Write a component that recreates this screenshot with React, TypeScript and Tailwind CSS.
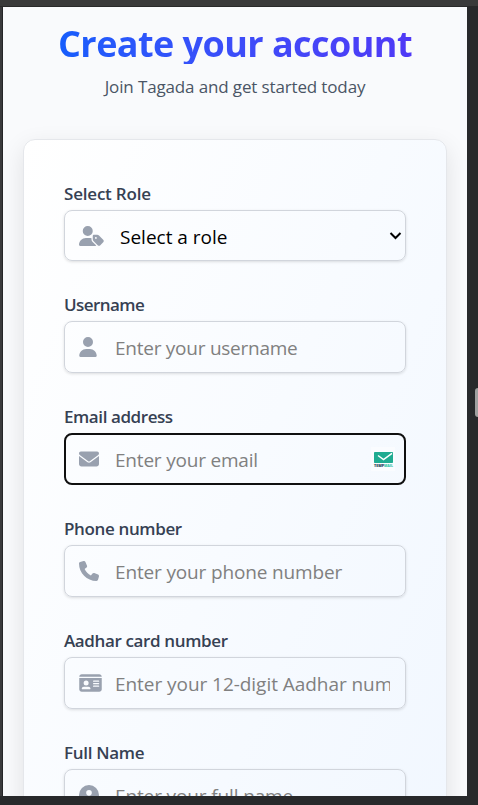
import type { ReactNode } from "react";
import { FaUser, FaEnvelope, FaPhone, FaIdCard, FaUserTag, FaCircleUser } from "react-icons/fa6";

function TempMailBadge() {
  return (
    <svg width="24" height="24" viewBox="0 0 24 24" className="shrink-0">
      <rect width="24" height="24" fill="#fafcff" />
      <rect x="3" y="5" width="19" height="11" rx="0.8" fill="#1fab91" />
      <path d="M7 8.5l5.5 4L21 6.4" fill="none" stroke="#fff" strokeWidth="1.5" />
      <text x="3" y="20" fontSize="4" fontWeight="800" fontFamily="Open Sans, sans-serif" textLength="10" lengthAdjust="spacingAndGlyphs" fill="#17384f">TEMP</text>
      <text x="13" y="20" fontSize="4" fontWeight="800" fontFamily="Open Sans, sans-serif" textLength="9" lengthAdjust="spacingAndGlyphs" fill="#2fc3a5">MAIL</text>
    </svg>
  );
}

type FieldProps = {
  label: string;
  icon: ReactNode;
  text: string;
  labelClass: string;
  textClass: string;
  focused?: boolean;
};

function Field({ label, icon, text, labelClass, textClass, focused }: FieldProps) {
  return (
    <div className="flex h-[112px] shrink-0 flex-col">
      <div className={`h-[25px] whitespace-nowrap text-[17px] leading-[25px] font-semibold text-[#364153] ${labelClass}`}>{label}</div>
      <div
        className={`mt-[4px] flex h-[52px] shrink-0 items-center rounded-lg ${
          focused ? "border-2 border-[#101010] pr-[9px] pl-[13px]" : "border border-[#d1d5dc] pr-[15px] pl-[14px] shadow-[0_1px_3px_rgba(0,0,0,0.13)]"
        }`}
      >
        <div className="flex w-[36px] shrink-0 items-center text-[#99a1af]">{icon}</div>
        <div className={`min-w-0 flex-1 overflow-hidden whitespace-nowrap pt-[2px] text-[19px] leading-[28px] text-[#808080] ${textClass}`}>{text}</div>
        {focused && <TempMailBadge />}
      </div>
    </div>
  );
}

export default function App() {
  return (
    <div className="h-[805px] w-[478px] overflow-hidden bg-[#28292b] font-['Open_Sans','Noto_Sans',sans-serif]">
      <div className="h-[7px] border-b border-[#292929] bg-[#3a3a3a]" />
      <div className="flex h-[789px]">
        <div className="w-[3px] shrink-0 border-r border-[#252527] bg-[#3a3a3c]" />
        <main className="flex w-[464px] shrink-0 flex-col overflow-hidden bg-[#f9fafc] px-[20px]">
          <h1 className="mt-[13px] h-[44px] w-fit shrink-0 self-center whitespace-nowrap bg-linear-to-r from-[#155dfc] to-[#4f39f6] bg-clip-text text-[36px] leading-[48px] font-bold tracking-[-0.56px] text-transparent">
            Create your account
          </h1>
          <p className="mt-[9px] h-[26px] shrink-0 pt-px text-center text-[17px] leading-[26px] tracking-[-0.14px] text-[#4a5565]">Join Tagada and get started today</p>
          <section className="mt-[40px] h-[1000px] shrink-0 rounded-xl border border-[#e5e7eb] bg-linear-to-br from-white to-[#eff6ff] px-[40px] pt-[41px] shadow-[0_8px_24px_rgba(0,0,0,0.1)]">
            <div className="flex h-[112px] flex-col">
              <div className="h-[25px] whitespace-nowrap text-[17px] leading-[25px] font-semibold tracking-[-0.2px] text-[#364153]">Select Role</div>
              <div className="mt-[4px] flex h-[51px] items-center rounded-lg border border-[#d1d5dc] pr-[3px] pl-[14px] shadow-[0_1px_3px_rgba(0,0,0,0.13)]">
                <div className="flex w-[41px] items-center text-[#99a1af]"><FaUserTag className="h-[20px] w-[25px]" /></div>
                <span className="flex-1 pt-[2px] text-[19px] leading-[28px] tracking-[0px] text-black">Select a role</span>
                <svg width="13" height="9" viewBox="0 0 13 9" fill="none"><path d="M1.5 2l5 5 5-5" stroke="#000" strokeWidth="2" /></svg>
              </div>
            </div>
            <div className="-mt-px">
              <Field label="Username" labelClass="tracking-[-0.56px]" icon={<FaUser className="h-[20px] w-[18px]" />} text="Enter your username" textClass="tracking-[-0.25px]" />
              <Field label="Email address" labelClass="tracking-[-0.42px]" icon={<FaEnvelope className="size-[20px]" />} text="Enter your email" textClass="tracking-[-0.2px]" focused />
              <Field label="Phone number" labelClass="tracking-[-0.36px]" icon={<FaPhone className="size-[20px]" />} text="Enter your phone number" textClass="tracking-[-0.15px]" />
              <Field label="Aadhar card number" labelClass="tracking-[-0.37px]" icon={<FaIdCard className="h-[20px] w-[23px]" />} text="Enter your 12-digit Aadhar number" textClass="tracking-[-0.05px]" />
              <Field label="Full Name" labelClass="tracking-[-0.3px]" icon={<FaCircleUser className="size-[20px]" />} text="Enter your full name" textClass="tracking-[-0.13px]" />
            </div>
          </section>
        </main>
        <div className="flex flex-1 justify-end pt-[381px]">
          <div className="h-[29px] w-[3px] rounded-l-full bg-[#a0a0a0]" />
        </div>
      </div>
    </div>
  );
}
